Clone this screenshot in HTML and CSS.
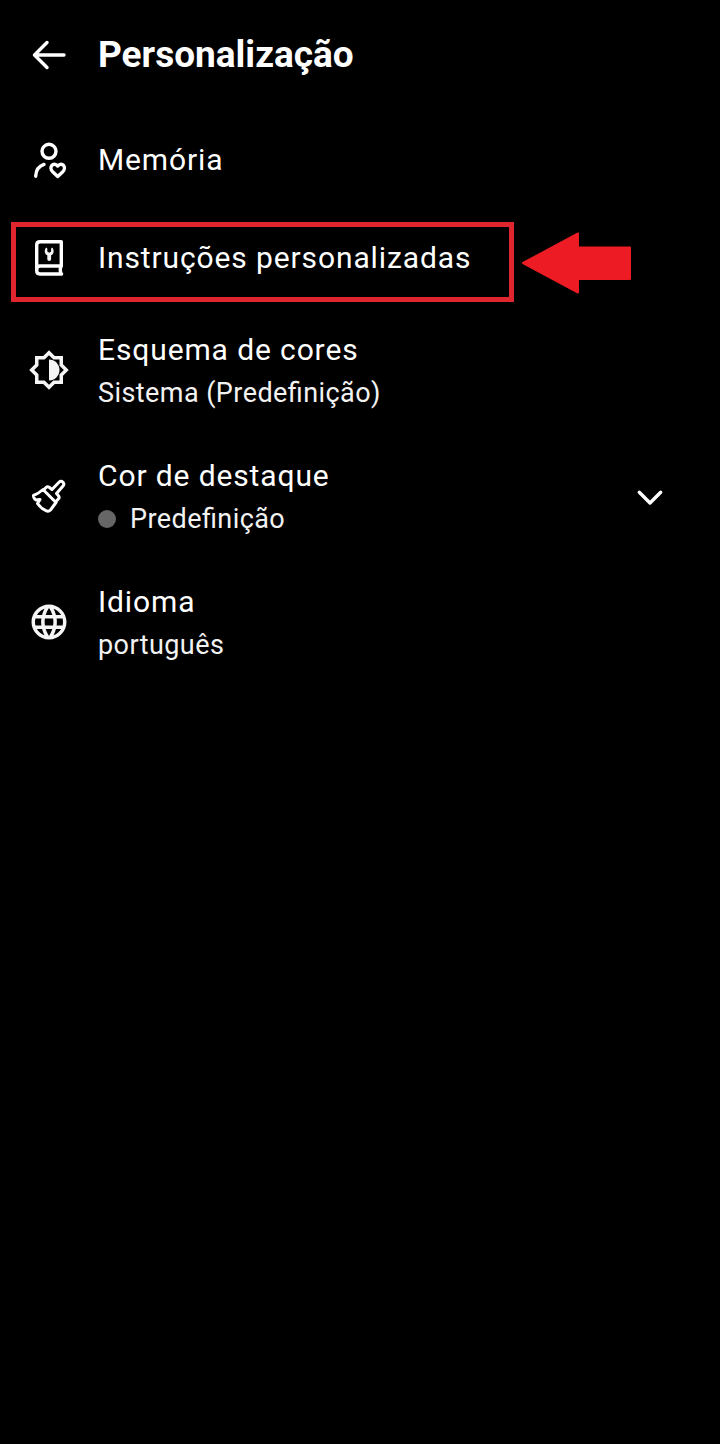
FILE: index.html
```html
<!DOCTYPE html>
<html lang="pt">
<head>
    <meta charset="UTF-8">
    <meta name="viewport" content="width=device-width, initial-scale=1.0">
    <title>Personalização</title>
    <link rel="stylesheet" href="styles.css">
</head>
<body>
    <header class="header">
        <svg class="icon" viewBox="0 0 42 42">
            <path class="line" d="M36 21H6.5M19 8.5L6.5 21L19 33.5"/>
        </svg>
        <h1>Personalização</h1>
    </header>

    <main class="settings">
        <div class="row">
            <svg class="icon" viewBox="0 0 42 42">
                <circle class="line" cx="21" cy="12.3" r="7"/>
                <path class="line" d="M7.7 37.2C8 31.5 11 27 16 25.4"/>
                <path class="line" d="M29.7 37.4L24.6 32.7C20.3 28.2 25.3 22.2 29.7 27C34.1 22.2 39.1 28.2 34.8 32.7Z"/>
            </svg>
            <div class="text">
                <div class="title">Memória</div>
            </div>
        </div>

        <div class="row">
            <svg class="icon" viewBox="0 0 42 42">
                <path class="line" d="M33.3 29V4.8H12C10 4.8 8.7 6 8.7 8V33.5C8.7 35.7 10 37 12 37H33.6M8.7 33C8.7 30.500 10 29 12 29H33.3C32 31.5 32 34.5 33.3 37"/>
                <path class="fill" d="M18.3 10.5C15.8 13 16.5 17 19.3 18.2V22.2Q19.3 24 21.2 24Q23.1 24 23.1 22.2V18.2C25.9 17 26.600 13 24.1 10.5L23.1 11.5V14.5L21.2 15.8L19.3 14.5V11.5Z"/>
            </svg>
            <div class="text">
                <div class="title">Instruções personalizadas</div>
            </div>
            <div class="highlight-box"></div>
            <svg class="pointer" viewBox="0 0 110 62">
                <path d="M1 31L56 1.500V15.5H108V47H56V60.500Z"/>
            </svg>
        </div>

        <div class="row two-line">
            <svg class="icon" viewBox="0 0 24 24">
                <path class="fill" fill-rule="evenodd" d="M20 15.31L23.31 12 20 8.69V4h-4.69L12 .69 8.69 4H4v4.69L.69 12 4 15.31V20h4.69L12 23.31 15.31 20H20zM18 9.52V6h-3.52L12 3.52 9.52 6H6v3.52L3.52 12 6 14.48V18h3.52L12 20.48 14.48 18H18v-3.52L20.48 12z"/>
                <path class="fill" d="M12 6v12c3.31 0 6-2.69 6-6s-2.69-6-6-6z"/>
            </svg>
            <div class="text">
                <div class="title">Esquema de cores</div>
                <div class="subtitle">Sistema (Predefinição)</div>
            </div>
        </div>

        <div class="row two-line">
            <svg class="icon" viewBox="0 0 42 42">
                <path class="line thin" d="M16 14.5L18 12.5Q19.5 11 21.5 12.5L24 14.5L31 7.2Q33 5.2 35 7.2Q36.8 9 34.8 11.2L28.5 18.5L30.5 20.8Q31.8 22.5 30.3 24L28 26.5"/>
                <path class="line thin" d="M15 14.5L28 27.5L22.5 35Q20.5 37 18 35.7Q13 33.5 9.5 28.5L12 24.5L8 25Q5.5 23.5 5.5 20.5Q10 19 15 14.5Z"/>
            </svg>
            <div class="text">
                <div class="title">Cor de destaque</div>
                <div class="subtitle"><span class="dot"></span>Predefinição</div>
            </div>
            <svg class="icon" viewBox="0 0 42 42">
                <path class="line" d="M10.3 17.3L21 28L31.7 17.3"/>
            </svg>
        </div>

        <div class="row two-line">
            <svg class="icon" viewBox="0 0 24 24">
                <path class="fill" d="M11.99 2C6.47 2 2 6.48 2 12s4.47 10 9.99 10C17.52 22 22 17.52 22 12S17.52 2 11.99 2zm6.93 6h-2.95c-.32-1.25-.78-2.45-1.38-3.56 1.84.63 3.37 1.91 4.33 3.56zM12 4.04c.83 1.2 1.48 2.53 1.91 3.96h-3.82c.43-1.43 1.08-2.76 1.91-3.96zM4.26 14C4.1 13.36 4 12.69 4 12s.1-1.36.26-2h3.38c-.08.66-.14 1.32-.14 2 0 .68.06 1.34.14 2H4.26zm.82 2h2.95c.32 1.25.78 2.45 1.38 3.56-1.84-.63-3.37-1.9-4.33-3.56zm2.95-8H5.08c.96-1.66 2.49-2.93 4.33-3.56C8.81 5.55 8.35 6.75 8.03 8zM12 19.96c-.83-1.2-1.48-2.53-1.91-3.96h3.82c-.43 1.43-1.08 2.76-1.91 3.96zM14.34 14H9.66c-.09-.66-.16-1.32-.16-2 0-.68.07-1.35.16-2h4.68c.09.65.16 1.32.16 2 0 .68-.07 1.34-.16 2zm.25 5.56c.6-1.11 1.06-2.31 1.38-3.56h2.95c-.96 1.65-2.49 2.93-4.33 3.56zM16.36 14c.08-.66.14-1.32.14-2 0-.68-.06-1.34-.14-2h3.38c.16.64.26 1.31.26 2s-.1 1.36-.26 2h-3.38z"/>
            </svg>
            <div class="text">
                <div class="title">Idioma</div>
                <div class="subtitle">português</div>
            </div>
        </div>
    </main>
</body>
</html>
```

FILE: styles.css
```css
/* Base Styling */
* {
    box-sizing: border-box;
}

body {
    margin: 0;
    min-height: 100vh;
    background: #000;
    color: #fff;
    font-family: Roboto, sans-serif;
    font-feature-settings: "liga" 1;
}

.header {
    display: flex;
    align-items: center;
    gap: 28px;
    height: 111px;
    padding: 0 28px 2px;
}

h1 {
    margin: 0;
    font-size: 37px;
    font-weight: 700;
    line-height: 48px;
}

/* Settings list */
.row {
    position: relative;
    display: flex;
    align-items: center;
    gap: 28px;
    height: 98px;
    padding: 0 49px 0 28px;
}

.two-line {
    height: 126px;
}

.text {
    flex: 1;
}

.title {
    font-size: 30px;
    line-height: 46px;
    letter-spacing: 0.88px;
}

.subtitle {
    display: flex;
    align-items: center;
    font-size: 27px;
    line-height: 40px;
    letter-spacing: 0.43px;
    color: #f2f2f2;
}

.dot {
    width: 18px;
    height: 18px;
    margin-right: 14px;
    border-radius: 50%;
    background: #666;
}

/* Icons */
.icon {
    flex: none;
    width: 42px;
    height: 42px;
}

.line {
    fill: none;
    stroke: #fff;
    stroke-width: 3.4;
    stroke-linecap: round;
    stroke-linejoin: round;
}

.thin {
    stroke-width: 3;
}

.fill {
    fill: #f5f5f5;
}

/* Red box and arrow over the custom instructions row */
.highlight-box {
    position: absolute;
    top: 13px;
    left: 11px;
    width: 503px;
    height: 80px;
    border: 5px solid #df262e;
}

.pointer {
    position: absolute;
    top: 23px;
    left: 522px;
    width: 110px;
    height: 62px;
    fill: #ed1c24;
    stroke: #ed1c24;
    stroke-width: 2;
    stroke-linejoin: round;
}
```
